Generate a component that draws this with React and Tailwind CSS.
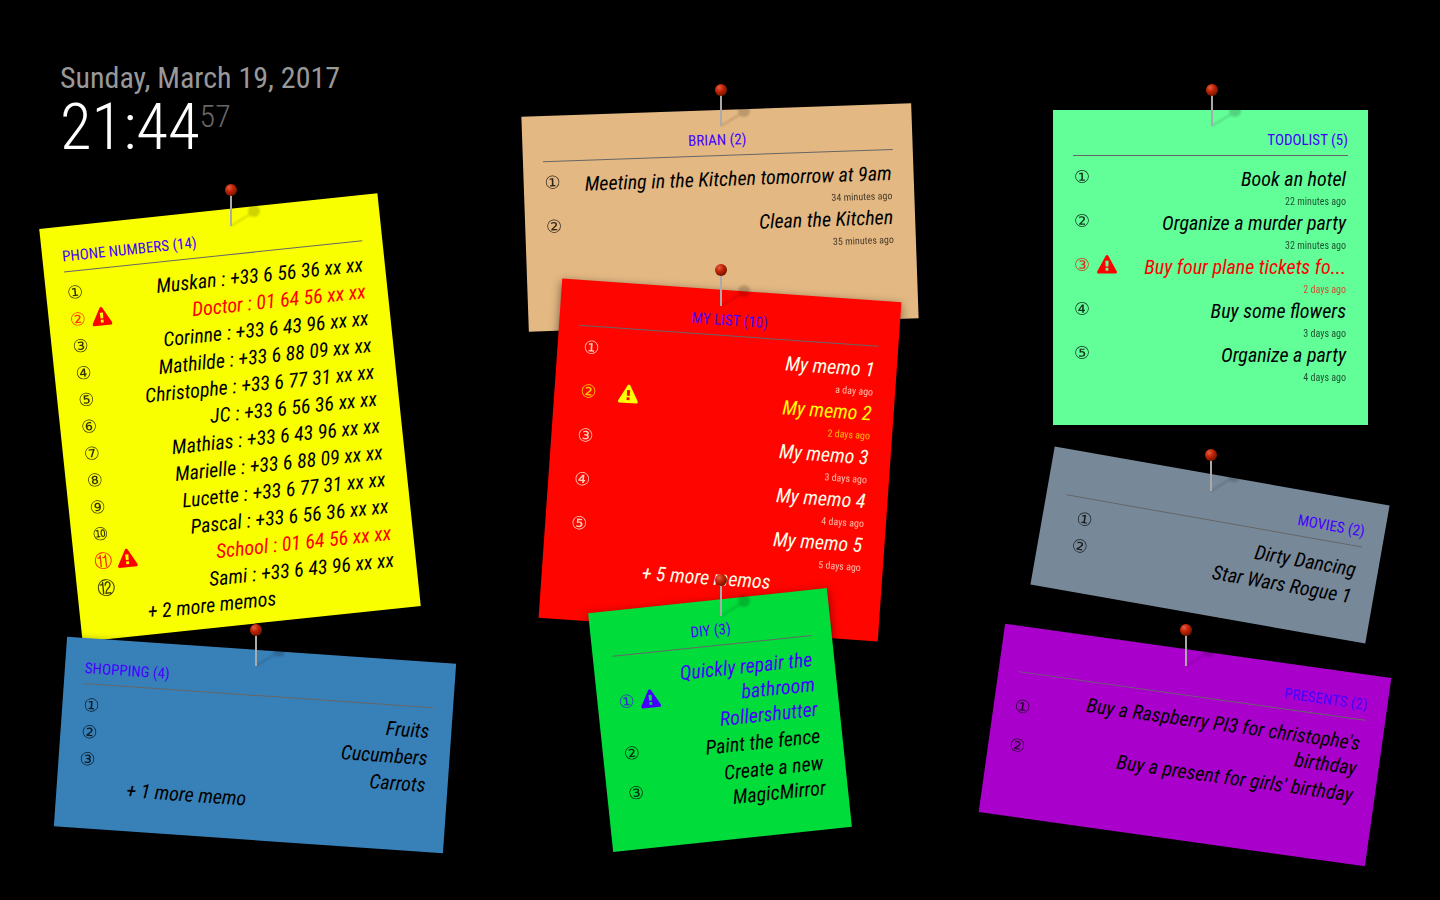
const NARROW = "grid-cols-[18px_32px_1fr]";
const TIGHT = "grid-cols-[18px_30px_1fr]";

const COLUMNS = [
  {
    align: "items-start",
    notes: [
      {
        title: "Phone numbers (14)",
        titleAlign: "text-left",
        place: "mt-[50px]",
        paper: "w-[340px] min-h-[415px] -rotate-6 bg-[#faff00] text-black",
        grid: TIGHT,
        alert: "text-[#ff0000]",
        more: "+ 2 more memos",
        memos: [
          { text: "Muskan : +33 6 56 36 xx xx" },
          { text: "Doctor : 01 64 56 xx xx", alert: true },
          { text: "Corinne : +33 6 43 96 xx xx" },
          { text: "Mathilde : +33 6 88 09 xx xx" },
          { text: "Christophe : +33 6 77 31 xx xx" },
          { text: "JC : +33 6 56 36 xx xx" },
          { text: "Mathias : +33 6 43 96 xx xx" },
          { text: "Marielle : +33 6 88 09 xx xx" },
          { text: "Lucette : +33 6 77 31 xx xx" },
          { text: "Pascal : +33 6 56 36 xx xx" },
          { text: "School : 01 64 56 xx xx", alert: true },
          { text: "Sami : +33 6 43 96 xx xx" },
        ],
      },
      {
        title: "Shopping (4)",
        titleAlign: "text-left",
        place: "mt-[25px]",
        paper: "w-[390px] min-h-[190px] rotate-4 bg-[#3880b8] text-black",
        grid: NARROW,
        more: "+ 1 more memo",
        memos: [{ text: "Fruits" }, { text: "Cucumbers" }, { text: "Carrots" }],
      },
    ],
  },
  {
    align: "items-center",
    notes: [
      {
        title: "Brian (2)",
        titleAlign: "text-center",
        place: "mt-[50px]",
        paper: "w-[390px] min-h-[215px] -rotate-2 bg-[#e3b883] text-black",
        grid: "grid-cols-[18px_16px_1fr]",
        memos: [
          { text: "Meeting in the Kitchen tomorrow at 9am", age: "34 minutes ago" },
          { text: "Clean the Kitchen", age: "35 minutes ago" },
        ],
      },
      {
        title: "My list (10)",
        titleAlign: "text-center",
        place: "-mt-[35px]",
        paper: "w-[340px] min-h-[340px] rotate-4 bg-[#ff0500] text-[#ffffe8]",
        grid: "grid-cols-[28px_52px_1fr]",
        alert: "text-[#ffff00]",
        more: "+ 5 more memos",
        memos: [
          { text: "My memo 1", age: "a day ago" },
          { text: "My memo 2", age: "2 days ago", alert: true },
          { text: "My memo 3", age: "3 days ago" },
          { text: "My memo 4", age: "4 days ago" },
          { text: "My memo 5", age: "5 days ago" },
        ],
      },
      {
        title: "DIY (3)",
        titleAlign: "text-center",
        place: "-mt-[30px]",
        paper: "w-[240px] min-h-[240px] -rotate-6 bg-[#00dc3a] text-black",
        grid: TIGHT,
        alert: "text-[#4400ff]",
        memos: [
          { text: "Quickly repair the bathroom Rollershutter", alert: true },
          { text: "Paint the fence" },
          { text: "Create a new MagicMirror" },
        ],
      },
    ],
  },
  {
    align: "items-end",
    notes: [
      {
        title: "Todolist (5)",
        titleAlign: "text-right",
        place: "mt-[50px] mr-3",
        paper: "w-[315px] min-h-[315px] bg-[#62ff99] text-black",
        grid: NARROW,
        alert: "text-[#ff0000]",
        memos: [
          { text: "Book an hotel", age: "22 minutes ago" },
          { text: "Organize a murder party", age: "32 minutes ago" },
          { text: "Buy four plane tickets fo...", age: "2 days ago", alert: true },
          { text: "Buy some flowers", age: "3 days ago" },
          { text: "Organize a party", age: "4 days ago" },
        ],
      },
      {
        title: "Movies (2)",
        titleAlign: "text-right",
        place: "mt-[50px]",
        paper: "w-[340px] min-h-[140px] rotate-10 bg-[#778899] text-black",
        grid: "grid-cols-[44px_32px_1fr]",
        memos: [{ text: "Dirty Dancing" }, { text: "Star Wars Rogue 1" }],
      },
      {
        title: "Presents (2)",
        titleAlign: "text-right",
        place: "mt-[35px]",
        paper: "w-[390px] min-h-[190px] rotate-8 bg-[#aa00cc] text-black",
        grid: NARROW,
        memos: [
          { text: "Buy a Raspberry PI3 for christophe's birthday" },
          { text: "Buy a present for girls' birthday" },
        ],
      },
    ],
  },
];

function Pin() {
  return (
    <svg
      aria-hidden="true"
      viewBox="0 0 50 44"
      className="absolute -top-[26px] left-1/2 -ml-[5px] h-[44px] w-[50px]"
    >
      <defs>
        <radialGradient id="pin-head" cx="0.35" cy="0.3" r="0.75">
          <stop offset="0" stopColor="#e0604a" />
          <stop offset="0.45" stopColor="#c42402" />
          <stop offset="1" stopColor="#6a1400" />
        </radialGradient>
        <filter id="pin-blur" x="-50%" y="-50%" width="200%" height="200%">
          <feGaussianBlur stdDeviation="1" />
        </filter>
      </defs>
      <g filter="url(#pin-blur)" opacity="0.17">
        <path d="M6 42 L27 29" stroke="#000" strokeWidth="1.5" />
        <circle cx="29" cy="27" r="6" fill="#000" />
      </g>
      <rect x="5" y="11" width="2" height="31" fill="#aaa" />
      <circle cx="6" cy="6" r="6" fill="url(#pin-head)" />
    </svg>
  );
}

function Warning() {
  return (
    <svg viewBox="0 0 1792 1792" fill="currentColor" role="img" aria-label="Important" className="size-5">
      <path d="M1024 1375v-190q0-14-9.5-23.5t-22.5-9.5h-192q-13 0-22.5 9.5t-9.5 23.5v190q0 14 9.5 23.5t22.5 9.5h192q13 0 22.5-9.5t9.5-23.5zm-2-374l18-459q0-12-10-19-13-11-24-11h-220q-11 0-24 11-10 7-10 21l17 457q0 10 10 16.5t24 6.5h185q14 0 23.5-6.5t10.5-16.5zm-14-934l768 1408q35 63-2 126-17 29-46.5 46t-63.5 17h-1536q-34 0-63.5-17t-46.5-46q-37-63-2-126l768-1408q17-31 47-49t65-18 65 18 47 49z" />
    </svg>
  );
}

function Memo({ memo, index, note }) {
  return (
    <li className={`grid items-center ${note.grid} ${memo.alert ? note.alert : ""}`}>
      <span className="flex justify-center pb-1 font-['DejaVu_Sans',sans-serif] text-lg leading-[23px] opacity-80">
        {String.fromCodePoint(0x2460 + index)}
      </span>
      <span className="flex justify-center pb-1">{memo.alert && <Warning />}</span>
      <span className="pt-0.5 text-right text-xl leading-[25px] italic">{memo.text}</span>
      {memo.age && (
        <time className="col-start-3 pt-0.5 text-right text-[10px] leading-[15px] opacity-70">{memo.age}</time>
      )}
    </li>
  );
}

function Note({ note }) {
  return (
    <section className={`relative ${note.place}`}>
      <div className={`px-5 pt-5 shadow-[0_3px_10px_rgba(0,0,0,0.5)] ${note.paper}`}>
        <h2
          className={`border-b border-[#666] pb-[5px] text-[15px] leading-5 text-[#4400ff] uppercase ${note.titleAlign}`}
        >
          {note.title}
        </h2>
        <ol className="mt-[9px] pr-0.5">
          {note.memos.map((memo, index) => (
            <Memo key={memo.text} memo={memo} index={index} note={note} />
          ))}
        </ol>
        {note.more && (
          <div className={`grid ${note.grid}`}>
            <p className="col-start-3 text-xl leading-[27px] italic">{note.more}</p>
          </div>
        )}
      </div>
      <Pin />
    </section>
  );
}

function Clock() {
  return (
    <header className="font-light">
      <p className="text-[30px] leading-[35px] font-normal text-[#999]">Sunday, March 19, 2017</p>
      <p className="flex items-start text-[65px] leading-[65px] text-white">
        21:44
        <span className="text-[32px] leading-[42px] text-[#666]">57</span>
      </p>
    </header>
  );
}

export default function App() {
  return (
    <main className="flex min-h-screen items-start justify-between overflow-hidden bg-black px-[60px] pt-[60px] font-['Roboto_Condensed',Roboto,sans-serif]">
      {COLUMNS.map((column, index) => (
        <div key={column.align} className={`flex w-[390px] flex-col ${column.align}`}>
          {index === 0 && <Clock />}
          {column.notes.map((note) => (
            <Note key={note.title} note={note} />
          ))}
        </div>
      ))}
    </main>
  );
}
